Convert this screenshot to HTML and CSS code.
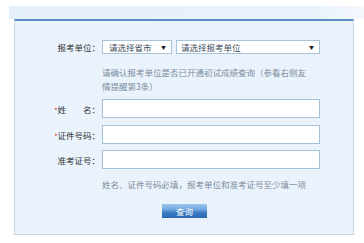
FILE: index.html
```html
<!DOCTYPE html>
<html lang="zh-CN">
<head>
    <meta charset="UTF-8">
    <meta name="viewport" content="width=device-width, initial-scale=1.0">
    <title>初试成绩查询</title>
    <link rel="stylesheet" href="styles.css">
</head>
<body>
    <div class="page-head"></div>

    <!-- 查询表单 -->
    <div class="panel">
        <form class="query-form">
            <div class="row">
                <label class="label">报考单位：</label>
                <div class="field selects">
                    <div class="fake-select small"><span>请选择省市</span><span class="arrow">▼</span></div>
                    <div class="fake-select wide"><span>请选择报考单位</span><span class="arrow">▼</span></div>
                </div>
            </div>
            <p class="note">请确认报考单位是否已开通初试成绩查询（参看右侧友情提醒第3条）</p>
            <div class="row row-input first">
                <label class="label"><i class="req">*</i>姓&emsp;&emsp;名：</label>
                <input type="text" class="field text-input">
            </div>
            <div class="row row-input">
                <label class="label"><i class="req">*</i>证件号码：</label>
                <input type="text" class="field text-input">
            </div>
            <div class="row row-input last">
                <label class="label">准考证号：</label>
                <input type="text" class="field text-input">
            </div>
            <p class="note hint">姓名、证件号码必填，报考单位和准考证号至少填一项</p>
            <div class="actions">
                <button type="button" class="btn-query">查询</button>
            </div>
        </form>
    </div>
</body>
</html>
```

FILE: styles.css
```css
/* page de consultation */
* {
    box-sizing: border-box;
}

body {
    margin: 0;
    font-family: "Noto Sans CJK SC", "Noto Sans", sans-serif;
    font-size: 8.5px;
    color: #333;
    background-color: #fff;
}

.page-head {
    margin: 6px 0 0 9px;
    height: 13px;
    background: linear-gradient(to right, #e6f0fa, #e9f2fb 85%, #f4f8fd);
}

.panel {
    margin-left: 14px;
    width: 340px;
    height: 216px;
    background-color: #eaf3fc;
    border: 1px solid #c9d8e6;
    border-top: 2px solid #5a8ec2;
    padding-top: 19px;
}

.query-form {
    margin: 0;
}

.row {
    display: flex;
    align-items: center;
}

.label {
    width: 85px;
    margin-right: 2px;
    text-align: right;
    white-space: nowrap;
    color: #333;
}

.req {
    font-style: normal;
    font-size: 7px;
    color: #e01010;
}

.selects {
    display: flex;
    gap: 4px;
}

.fake-select {
    height: 14px;
    display: flex;
    align-items: center;
    justify-content: space-between;
    padding: 0 5px 0 6px;
    background-color: #fff;
    border: 1px solid #a9c4da;
    color: #3c4e60;
    line-height: 12px;
}

.fake-select.small {
    width: 70px;
}

.fake-select.wide {
    width: 144px;
    padding-left: 4px;
}

.arrow {
    font-size: 5px;
    color: #222;
}

.note {
    margin: 11px 0 0 87px;
    width: 208px;
    line-height: 14px;
    color: #7d8c9e;
}

.row-input {
    margin-top: 6px;
}

.row-input + .row-input {
    margin-top: 7px;
}

.row-input.last {
    margin-top: 6px;
}

.text-input {
    width: 218px;
    height: 19px;
    margin: 0;
    padding: 0 4px;
    background-color: #fff;
    border: 1px solid #a3c1d8;
    font: inherit;
}

.note.hint {
    margin-top: 8px;
    width: auto;
}

.actions {
    margin: 13px 0 0 147px;
}

.btn-query {
    width: 45px;
    height: 14px;
    padding: 0;
    border: none;
    font: inherit;
    color: #fff;
    line-height: 14px;
    background: linear-gradient(to bottom, #9cc8ee 0%, #6ea6dd 40%, #3d7ec5 60%, #2b68b0 100%);
    cursor: pointer;
}
```
